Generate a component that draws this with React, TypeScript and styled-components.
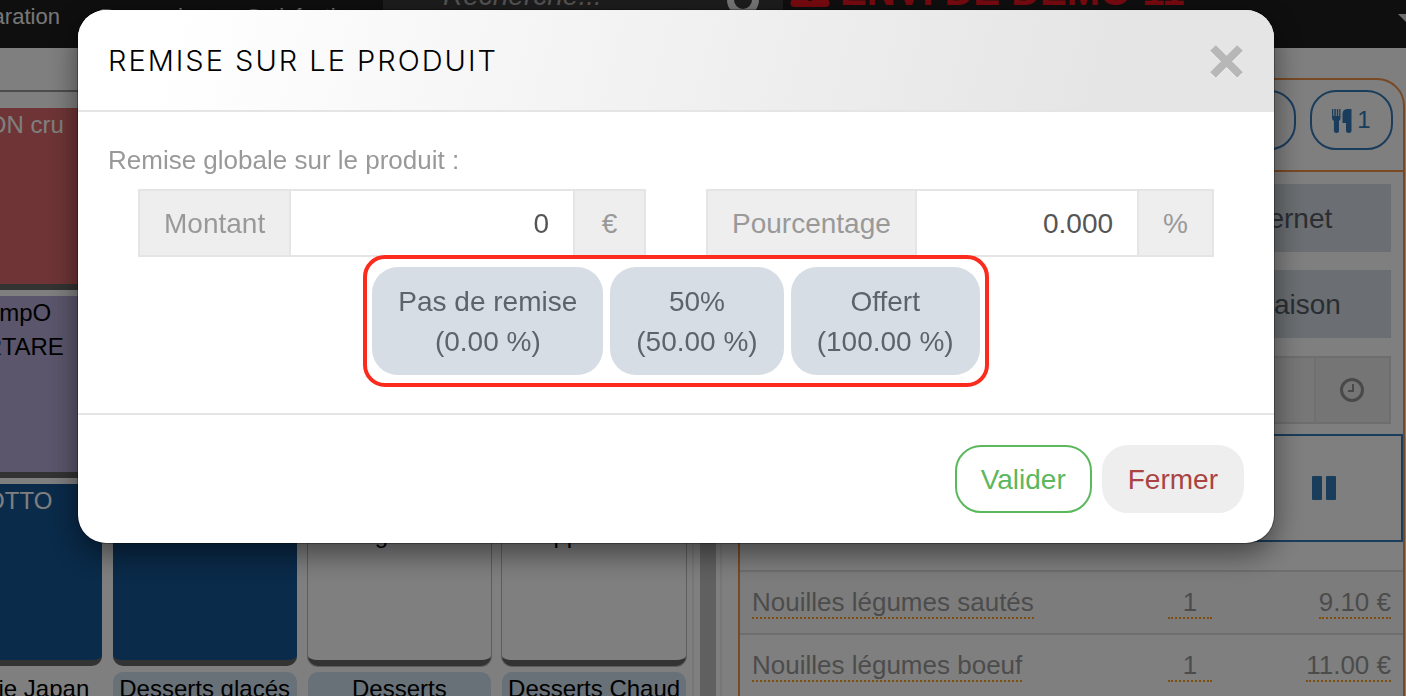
import React from "react";
import styled, { createGlobalStyle, css } from "styled-components";

const sans = `"Liberation Sans", Arial, Helvetica, sans-serif`;
const blue = "#337ab7";
const orange = "#f0934a";

const GlobalStyle = createGlobalStyle`
  * { box-sizing: border-box; }
  html, body { margin: 0; height: 100%; overflow: hidden; background: #fff; }
  body { font-family: ${sans}; font-size: 28px; line-height: 40px; color: #555; }
  button, input { font: inherit; color: inherit; margin: 0; }
  button { cursor: pointer; }
`;

/* ---------- Till screen behind the dialog ---------- */

const Page = styled.div`
  display: flex;
  flex-direction: column;
  height: 100vh;
  overflow: hidden;
`;

const TopBar = styled.header`
  flex: none;
  display: flex;
  height: 100px;
  margin-top: -52px;
  background: #1e1e1e;
`;

const NavLinks = styled.nav`
  display: flex;
  gap: 40px;
  width: 383px;
  padding-top: 51px;
  overflow: hidden;
  justify-content: flex-end;
  padding-right: 23px;
`;

const NavLink = styled.a`
  flex: none;
  color: #eee;
  font-size: 22px;
  line-height: 36px;
  text-decoration: none;
`;

const SearchBox = styled.label`
  display: flex;
  align-items: flex-start;
  justify-content: space-between;
  width: 400px;
  padding: 28px 22px 0 60px;
  background: #3a3a3a;
`;

const SearchInput = styled.input`
  width: 240px;
  padding: 0;
  border: 0;
  background: none;
  line-height: 40px;
  &::placeholder {
    color: #a8a8a8;
    font-style: italic;
    opacity: 1;
  }
`;

const DemoNotice = styled.strong`
  display: flex;
  flex: 1;
  align-items: flex-start;
  gap: 10px;
  padding: 21px 0 0 7px;
  color: #f01420;
  font-size: 40px;
  line-height: 44px;
  white-space: nowrap;
`;

const CaretButton = styled.button`
  display: flex;
  align-items: flex-start;
  align-self: flex-end;
  width: 8px;
  height: 34px;
  padding: 0;
  border: 0;
  background: none;
  overflow: hidden;
  svg { flex: none; }
`;

const Workspace = styled.main`
  flex: 1;
  display: grid;
  grid-template-columns: minmax(0, 700fr) 16px minmax(0, 690fr);
  min-height: 0;
`;

const Catalogue = styled.section`
  display: flex;
  flex-direction: column;
  margin-right: 6px;
  border-right: 2px solid #efefef;
  overflow: hidden;
`;

const CatalogueBar = styled.div`
  flex: none;
  height: 44px;
  border-bottom: 2px solid #999;
`;

const Tiles = styled.div`
  display: grid;
  grid-template-columns: repeat(4, minmax(0, 1fr));
  grid-auto-rows: 182px;
  gap: 6px 11px;
  margin: 16px 6px 0 -82px;
`;

const Tile = styled.button<{ $bg: string; $fg?: string; $plain?: boolean }>`
  display: block;
  padding: 0 4px;
  border: 0 solid #666;
  border-bottom-width: 6px;
  border-radius: 10px;
  background: ${(p) => p.$bg};
  color: ${(p) => p.$fg ?? "#000"};
  font-size: 24px;
  line-height: 34px;
  white-space: nowrap;
  ${(p) =>
    p.$plain &&
    css`
      box-shadow: 0 0 0 1px #bbb;
    `}
  span { display: block; height: 176px; }
`;

const Splitter = styled.div`
  background: #c0c0c0;
`;

const OrderPane = styled.section`
  margin-left: 4px;
  border-left: 2px solid #efefef;
  padding: 30px 1px 0 16px;
  overflow: hidden;
`;

const Order = styled.div`
  border: 2px solid ${orange};
  border-radius: 28px;
  height: 900px;
`;

const OrderHead = styled.div`
  display: flex;
  justify-content: flex-end;
  gap: 14px;
  height: 92px;
  padding: 10px 10px 0;
  border-bottom: 2px solid ${orange};
`;

const Pill = styled.button`
  display: flex;
  align-items: center;
  justify-content: center;
  gap: 5px;
  width: 83px;
  height: 60px;
  padding: 0;
  border: 2px solid ${blue};
  border-radius: 26px;
  background: none;
  color: ${blue};
  font-size: 24px;
`;

const OrderOptions = styled.div`
  display: grid;
  grid-template-columns: 2fr 1fr;
  gap: 18px 2px;
  padding: 12px 12px 10px;
`;

const OptionButton = styled.button`
  grid-column: 2;
  height: 68px;
  padding: 2px 0 0;
  border: 0;
  background: #d6dde4;
  color: #555d66;
`;

const TimeField = styled.div`
  grid-column: 1 / -1;
  display: flex;
  height: 68px;
  border: 2px solid #dcdcdc;
  background: #eee;
`;

const TimeInput = styled.input`
  flex: 1;
  min-width: 0;
  border: 0;
  background: #eee;
`;

const TimeButton = styled.button`
  width: 75px;
  padding: 0;
  border: 0;
  border-left: 2px solid #e0e0e0;
  background: #ebebeb;
  svg { display: block; margin: auto; }
`;

const HoldButton = styled.button`
  display: flex;
  align-items: center;
  justify-content: flex-end;
  width: 100%;
  height: 108px;
  padding: 0 65px;
  border: 2px solid ${blue};
  background: none;
`;

const Lines = styled.table`
  width: 100%;
  margin-top: 28px;
  border-collapse: collapse;
  table-layout: fixed;
  color: #999;
  font-size: 26px;
  tr { height: 63px; border-top: 2px solid #ddd; }
  tr:nth-child(odd) { background: #f9f9f9; }
  td { padding: 0 12px 2px; }
  td:nth-child(2) { width: 68px; text-align: center; }
  td:nth-child(3) { width: 179px; text-align: right; }
`;

const Editable = styled.a<{ $wide?: boolean }>`
  display: inline-block;
  min-width: ${(p) => (p.$wide ? "44px" : "0")};
  border-bottom: 2px dotted #ff9c1a;
  color: inherit;
  line-height: 30px;
  text-decoration: none;
  white-space: nowrap;
`;

/* ---------- Dialog ---------- */

const Backdrop = styled.div`
  position: fixed;
  inset: 0;
  padding: 10px 132px 10px 78px;
  background: rgba(0, 0, 0, 0.5);
`;

const Dialog = styled.section`
  border-radius: 28px;
  background: #fff;
  box-shadow: 0 0 0 1px rgba(0, 0, 0, 0.3), 0 10px 30px rgba(0, 0, 0, 0.5);
  overflow: hidden;
`;

const DialogHead = styled.header`
  display: flex;
  align-items: center;
  justify-content: space-between;
  height: 102px;
  padding: 2px 30px 0;
  border-bottom: 2px solid #e5e5e5;
  background: linear-gradient(105deg, #fff 8%, #e5e5e5 86%);
`;

const DialogTitle = styled.h1`
  margin: 0;
  color: #000;
  font-family: Inter, ${sans};
  font-size: 29px;
  font-weight: 300;
  letter-spacing: 2px;
  text-transform: uppercase;
`;

const CloseButton = styled.button`
  padding: 0;
  border: 0;
  background: none;
  line-height: 0;
`;

const DialogBody = styled.div`
  padding: 28px 30px 38px;
`;

const Intro = styled.p`
  margin: 0 0 9px;
  color: #999;
  font-size: 26px;
`;

const Fields = styled.div`
  display: grid;
  grid-template-columns: minmax(0, 1fr) minmax(0, 1fr);
  gap: 60px;
  padding: 0 30px;
`;

const Field = styled.div`
  display: flex;
  height: 68px;
  border: 2px solid #e5e5e5;
  color: #999;
`;

const AddonLabel = styled.label`
  padding: 13px 24px 11px;
  border-right: 2px solid #e5e5e5;
  background: #eee;
`;

const AddonUnit = styled.span`
  min-width: 71px;
  padding: 13px 24px 11px;
  border-left: 2px solid #e5e5e5;
  background: #eee;
  text-align: center;
`;

const FieldInput = styled.input`
  flex: 1;
  min-width: 0;
  padding: 2px 24px 0;
  border: 0;
  outline: 0;
  background: #fff;
  color: #555;
  text-align: right;
`;

const Presets = styled.div`
  position: relative;
  display: flex;
  gap: 7px;
  width: fit-content;
  margin: 10px auto 0;
  &::after {
    content: "";
    position: absolute;
    inset: -12px -9px;
    border: 4px solid #fb2c1e;
    border-radius: 22px;
    pointer-events: none;
  }
`;

const Preset = styled.button`
  padding: 15px 26px 13px;
  border: 0;
  border-radius: 26px;
  background: #d6dde4;
  color: #5b646d;
`;

const DialogFoot = styled.footer`
  display: flex;
  justify-content: flex-end;
  gap: 10px;
  padding: 30px;
  border-top: 2px solid #e5e5e5;
`;

const FootButton = styled.button<{ $kind: "confirm" | "close" }>`
  height: 68px;
  padding: 2px 24px 0;
  border: 2px solid ${(p) => (p.$kind === "confirm" ? "#5cb85c" : "#eee")};
  border-radius: 26px;
  background: ${(p) => (p.$kind === "confirm" ? "#fff" : "#eee")};
  color: ${(p) => (p.$kind === "confirm" ? "#5cb85c" : "#a94442")};
`;

/* ---------- Icons ---------- */

const SearchIcon = () => (
  <svg width="36" height="50" viewBox="0 0 36 50" fill="none" stroke="#eee" strokeWidth="7">
    <circle cx="18" cy="24" r="12.500" />
    <path d="M27 34l8 12" />
  </svg>
);

const WarningIcon = () => (
  <svg width="40" height="38" viewBox="0 0 40 38">
    <path
      d="M17 2q3-4 6 0l16 30q2 5-3 6H4q-5-1-3-6z M17 10l1 11h4l1-11z M20 24a4 4 0 1 0 .1 0z"
      fill="#f01420"
      fillRule="evenodd"
    />
  </svg>
);

const CutleryIcon = () => (
  <svg width="20" height="25" viewBox="0 0 20 25" fill={blue}>
    <path d="M0 1h1.300v7h1V1h1.500v7h1V1h1.400v7h1V1h1.300v9q0 2-1.500 3v10q0 2-2.500 2t-2.600-2V13Q0 12 0 10z" />
    <path d="M19.500 1v22q0 2-2.700 2T14 23v-8h-3.500V6q0-5 5.500-5z" />
  </svg>
);

const ClockIcon = () => (
  <svg width="24" height="24" viewBox="0 0 24 24" fill="none" stroke="#939393">
    <circle cx="12" cy="12" r="10.500" strokeWidth="3" />
    <path d="M13 6v7H8" strokeWidth="2" />
  </svg>
);

const PauseIcon = () => (
  <svg width="24" height="24" viewBox="0 0 24 24" fill={blue}>
    <rect width="10" height="24" rx="1" />
    <rect x="14" width="10" height="24" rx="1" />
  </svg>
);

const CrossIcon = () => (
  <svg width="35" height="35" viewBox="0 0 35 35" fill="none" strokeWidth="8">
    <path d="M4 5l27 27M31 5L4 32" stroke="#f2f2f2" />
    <path d="M4 4l27 27M31 4L4 31" stroke="#b7b7b7" />
  </svg>
);

/* ---------- Data ---------- */

const tiles: { lines: string[]; bg: string; fg?: string; plain?: boolean }[] = [
  { lines: ["THON cru"], bg: "#de6a6c", fg: "#fff" },
  { lines: [], bg: "#fff" },
  { lines: [], bg: "#fff" },
  { lines: [], bg: "#fff" },
  { lines: ["CampO", "TARTARE"], bg: "#b6acd6" },
  { lines: [], bg: "#fff" },
  { lines: [], bg: "#fff" },
  { lines: [], bg: "#fff" },
  { lines: ["GOTTO"], bg: "#145694", fg: "#fff" },
  { lines: [], bg: "#145694", fg: "#fff" },
  { lines: ["", "Baguettes"], bg: "#fff", plain: true },
  { lines: ["", "Suppléments"], bg: "#fff", plain: true },
  { lines: ["Epicerie Japan"], bg: "#fff" },
  { lines: ["Desserts glacés"], bg: "#d0e0f0" },
  { lines: ["Desserts"], bg: "#d0e0f0" },
  { lines: ["Desserts Chaud"], bg: "#d0e0f0" },
];

const orderLines = [
  { name: "Nouilles légumes sautés", qty: "1", price: "9.10 €" },
  { name: "Nouilles légumes boeuf", qty: "1", price: "11.00 €" },
];

const presets = [
  { label: "Pas de remise", rate: "0.00 %" },
  { label: "50%", rate: "50.00 %" },
  { label: "Offert", rate: "100.00 %" },
];

export default function App() {
  return (
    <>
      <GlobalStyle />
      <Page>
        <TopBar>
          <NavLinks>
            <NavLink href="#preparation">Préparation</NavLink>
            <NavLink href="#demandes">Demandes</NavLink>
            <NavLink href="#satisfaction">Satisfaction</NavLink>
          </NavLinks>
          <SearchBox>
            <SearchInput type="text" placeholder="Recherche..." aria-label="Recherche" />
            <SearchIcon />
          </SearchBox>
          <DemoNotice>
            <WarningIcon />
            ENVI DE DEMO 11
          </DemoNotice>
          <CaretButton aria-label="Menu">
            <svg width="16" height="8" viewBox="0 0 16 8">
              <path d="M0 0h16L8 8z" fill="#ddd" />
            </svg>
          </CaretButton>
        </TopBar>
        <Workspace>
          <Catalogue>
            <CatalogueBar />
            <Tiles>
              {tiles.map((t, i) => (
                <Tile key={i} $bg={t.bg} $fg={t.fg} $plain={t.plain}>
                  <span>
                    {t.lines.map((line, n) => (
                      <React.Fragment key={n}>
                        {line}
                        <br />
                      </React.Fragment>
                    ))}
                  </span>
                </Tile>
              ))}
            </Tiles>
          </Catalogue>
          <Splitter />
          <OrderPane>
            <Order>
              <OrderHead>
                <Pill aria-label="Table" />
                <Pill>
                  <CutleryIcon />1
                </Pill>
              </OrderHead>
              <OrderOptions>
                <OptionButton>Internet</OptionButton>
                <OptionButton>Livraison</OptionButton>
                <TimeField>
                  <TimeInput type="text" aria-label="Heure" />
                  <TimeButton aria-label="Choisir l'heure">
                    <ClockIcon />
                  </TimeButton>
                </TimeField>
              </OrderOptions>
              <HoldButton aria-label="Mettre en attente">
                <PauseIcon />
              </HoldButton>
              <Lines>
                <tbody>
                  {orderLines.map((l) => (
                    <tr key={l.name}>
                      <td>
                        <Editable href="#nom">{l.name}</Editable>
                      </td>
                      <td>
                        <Editable href="#quantite" $wide>
                          {l.qty}
                        </Editable>
                      </td>
                      <td>
                        <Editable href="#prix">{l.price}</Editable>
                      </td>
                    </tr>
                  ))}
                  <tr>
                    <td colSpan={3} />
                  </tr>
                </tbody>
              </Lines>
            </Order>
          </OrderPane>
        </Workspace>
      </Page>

      <Backdrop>
        <Dialog role="dialog" aria-modal="true" aria-labelledby="dialog-title">
          <DialogHead>
            <DialogTitle id="dialog-title">Remise sur le produit</DialogTitle>
            <CloseButton aria-label="Fermer la fenêtre">
              <CrossIcon />
            </CloseButton>
          </DialogHead>
          <DialogBody>
            <Intro>Remise globale sur le produit :</Intro>
            <Fields>
              <Field>
                <AddonLabel htmlFor="amount">Montant</AddonLabel>
                <FieldInput id="amount" type="text" defaultValue="0" />
                <AddonUnit>€</AddonUnit>
              </Field>
              <Field>
                <AddonLabel htmlFor="percent">Pourcentage</AddonLabel>
                <FieldInput id="percent" type="text" defaultValue="0.000" />
                <AddonUnit>%</AddonUnit>
              </Field>
            </Fields>
            <Presets>
              {presets.map((p) => (
                <Preset key={p.label}>
                  {p.label}
                  <br />({p.rate})
                </Preset>
              ))}
            </Presets>
          </DialogBody>
          <DialogFoot>
            <FootButton $kind="confirm">Valider</FootButton>
            <FootButton $kind="close">Fermer</FootButton>
          </DialogFoot>
        </Dialog>
      </Backdrop>
    </>
  );
}
